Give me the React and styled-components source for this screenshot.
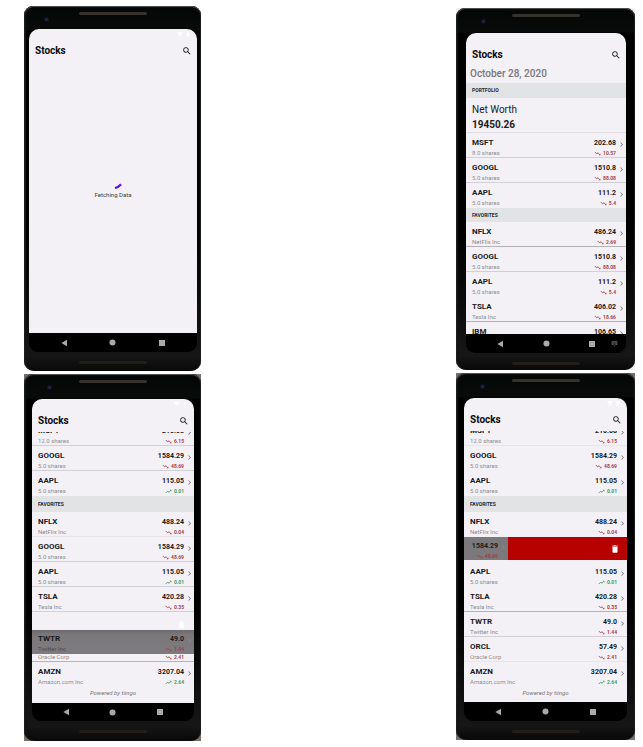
import React from "react";
import styled, { createGlobalStyle, css } from "styled-components";
import {
  MdSearch,
  MdTrendingDown,
  MdTrendingUp,
  MdChevronRight,
  MdDelete,
  MdSignalWifi4Bar,
  MdBatteryFull,
  MdKeyboardHide,
} from "react-icons/md";

const Global = createGlobalStyle`
  * { box-sizing: border-box; }
  body { margin: 0; background: #fff; font-family: Roboto, "Liberation Sans", sans-serif; color: #1b1a1c; }
  button { border: 0; padding: 0; background: none; color: inherit; font: inherit; display: flex; align-items: center; justify-content: center; }
  h1, h2, p, ul { margin: 0; padding: 0; }
  ul { list-style: none; }
  svg { display: block; }
`;

const Page = styled.main`
  display: flex;
  justify-content: space-between;
  align-items: flex-start;
  padding: 6px 8px 6px 24px;
`;

const Column = styled.div`
  display: flex;
  flex-direction: column;
  gap: 3px;
  padding-top: ${(p) => p.$drop || 0}px;
`;

const Backdrop = styled.div`
  background: ${(p) => p.$tone || "#fff"};
`;

const Frame = styled.section`
  display: flex;
  flex-direction: column;
  width: ${(p) => p.$width}px;
  padding: 0 ${(p) => p.$right}px 0 ${(p) => p.$left}px;
  background: linear-gradient(#050606 0, #090a0a 24px, #000 25px, #000 60%, #0b0b0b 80%, #161616 96%, #080808 100%);
  border-radius: 9px 9px 10px 10px;
  box-shadow: inset 0 1px 1px #555857, inset 2px 0 1px #161817, inset -1px 0 1px #161817;
`;

const Forehead = styled.div`
  position: relative;
  height: ${(p) => p.$height}px;
  padding-top: 6px;
`;

const Speaker = styled.div`
  width: 68px;
  height: 3px;
  margin: 0 auto;
  border-radius: 2px;
  background: ${(p) => (p.$dim ? "#211f18" : "#35312c")};
`;

const Camera = styled.div`
  position: absolute;
  left: ${(p) => p.$left}px;
  top: 12px;
  width: 3px;
  height: 3px;
  border-radius: 50%;
  background: #1d2350;
  box-shadow: 0 0 1px 1px #14161d;
`;

const Chin = styled.div`
  height: ${(p) => p.$height}px;
  padding-top: 9px;
`;

const Screen = styled.div`
  display: flex;
  flex-direction: column;
  background: #f3f1f5;
  border-radius: 10px 10px 0 0;
  overflow: hidden;
`;

const StatusBar = styled.div`
  display: flex;
  justify-content: flex-end;
  align-items: center;
  gap: 2px;
  height: 10px;
  padding-right: 6px;
  color: #fff;
`;

const TitleBar = styled.header`
  display: flex;
  justify-content: space-between;
  align-items: center;
  height: 23px;
  padding: 0 5px 0 6px;
`;

const Title = styled.h1`
  font-size: 10px;
  line-height: 13px;
  font-weight: 700;
  color: #0b0b0c;
`;

const Body = styled.div`
  height: ${(p) => p.$height}px;
  overflow: hidden;
`;

const Scrolled = styled.div`
  margin-top: -${(p) => p.$by}px;
`;

const Loading = styled(Body)`
  display: flex;
  flex-direction: column;
  align-items: center;
  justify-content: center;
  padding-bottom: 14px;
  font-size: 6px;
  line-height: 8px;
  color: #3a393b;
`;

const Spinner = styled.svg`
  width: 8px;
  height: 6px;
  margin: 0 0 2px 10px;
`;

const DateLine = styled.p`
  padding: 0 4px 2px;
  font-size: 10px;
  line-height: 15px;
  font-weight: 500;
  color: #77767a;
`;

const SectionTitle = styled.h2`
  padding: 0 6px;
  background: #e1e3e5;
  font-size: 5px;
  line-height: ${(p) => p.$line || 16}px;
  font-weight: 700;
  color: #29292a;
`;

const Worth = styled.div`
  height: 35px;
  padding: 4px 6px 0;
  font-size: 10px;
  line-height: 15px;
  border-bottom: 1px solid #dedce0;
`;

const WorthValue = styled.p`
  font-weight: 700;
`;

const lines = { dark: "#b4b2b6", mid: "#d2d0d4", faint: "#e7e5e9", none: "transparent" };

const Item = styled.li`
  display: grid;
  grid-template-columns: 1fr auto 10px;
  height: 25px;
  padding-top: 5px;
  border-bottom: 1px solid ${(p) => lines[p.$line || "none"]};
  padding-left: 6px;
  ${(p) =>
    p.$dragged &&
    css`
      height: 24px;
      padding-top: 4px;
      border-bottom: 0;
      background: linear-gradient(#6c6a6d, #7a787b 5px, #7d7b7e);
    `}
`;

const Stack = styled.div`
  display: flex;
  flex-direction: column;
  align-items: ${(p) => (p.$end ? "flex-end" : "flex-start")};
  gap: 1px;
`;

const Symbol = styled.span`
  font-size: 8px;
  line-height: 10px;
  font-weight: 700;
`;

const Price = styled.span`
  font-size: 7px;
  line-height: 10px;
  font-weight: 700;
`;

const Detail = styled.span`
  font-size: 6px;
  line-height: 8px;
  color: ${(p) => (p.$dim ? "#4d4b4e" : "#8f8d91")};
`;

const Change = styled.span`
  display: flex;
  align-items: center;
  gap: 2px;
  font-size: 5px;
  line-height: 8px;
  font-weight: 700;
  color: ${(p) => (p.$dim ? "#9f3d46" : p.$up ? "#3a9d62" : "#a9404a")};
`;

const Open = styled.button`
  height: 13px;
  color: ${(p) => (p.$dim ? "#8d8b8e" : "#7b797d")};
`;

const SwipeGap = styled.li`
  display: flex;
  justify-content: flex-end;
  align-items: center;
  height: 18px;
  padding: 6px 8px 0 0;
  color: #fff;
`;

const Peek = styled.li`
  display: flex;
  justify-content: space-between;
  align-items: flex-end;
  height: 8px;
  padding: 0 10px 0 6px;
  overflow: hidden;
  border-bottom: 1px solid ${lines.dark};
`;

const Swiped = styled.li`
  display: flex;
  height: 23px;
  margin-bottom: 2px;
  background: #b70000;
`;

const SwipedCard = styled.div`
  display: grid;
  grid-template-columns: 1fr 10px;
  width: 44px;
  padding-top: 4px;
  background: #7b797c;
`;

const DeleteButton = styled.button`
  margin-left: auto;
  width: 25px;
  color: #fff;
`;

const Credit = styled.p`
  padding-top: 2px;
  font-size: 6px;
  line-height: 8px;
  font-style: italic;
  text-align: center;
  color: #737175;
`;

const NavBar = styled.nav`
  position: relative;
  display: grid;
  grid-template-columns: repeat(3, 1fr);
  height: ${(p) => p.$height}px;
  padding: 0 11px;
  background: #000;
  border-radius: 0 0 9px 9px;
  color: #aaa;
`;

const KeyboardButton = styled.button`
  position: absolute;
  right: 8px;
  top: 6px;
  color: #555;
`;

function Trend({ value, up, dim }) {
  return (
    <Change $up={up} $dim={dim}>
      {up ? <MdTrendingUp size={7} /> : <MdTrendingDown size={7} />}
      {value}
    </Change>
  );
}

function Stock({ symbol, detail, price, change, up, line, dragged }) {
  return (
    <Item $line={line} $dragged={dragged}>
      <Stack>
        <Symbol>{symbol}</Symbol>
        {detail && <Detail $dim={dragged}>{detail}</Detail>}
      </Stack>
      <Stack $end>
        <Price>{price}</Price>
        {change && <Trend value={change} up={up} dim={dragged} />}
      </Stack>
      <Open aria-label={`Open ${symbol}`} $dim={dragged}>
        <MdChevronRight size={9} />
      </Open>
    </Item>
  );
}

function Phone({ width, left, right, top, nav, chin, camera, tone, status, keyboard, children }) {
  return (
    <Backdrop $tone={tone}>
      <Frame $width={width} $left={left} $right={right}>
        <Forehead $height={top}>
          <Speaker />
          <Camera $left={camera} />
        </Forehead>
        <Screen>
          <StatusBar>
            {status && (
              <>
                <MdSignalWifi4Bar size={6} />
                <MdBatteryFull size={6} />
              </>
            )}
          </StatusBar>
          <TitleBar>
            <Title>Stocks</Title>
            <button aria-label="Search">
              <MdSearch size={10} />
            </button>
          </TitleBar>
          {children}
        </Screen>
        <NavBar $height={nav}>
          <button aria-label="Back">
            <svg width="7" height="8" viewBox="0 0 7 8">
              <path d="M6 0.8v6.4L0.4 4z" fill="currentColor" />
            </svg>
          </button>
          <button aria-label="Home">
            <svg width="7" height="7" viewBox="0 0 7 7">
              <circle cx="3.5" cy="3.5" r="3" fill="currentColor" />
            </svg>
          </button>
          <button aria-label="Recent apps">
            <svg width="6" height="6" viewBox="0 0 6 6">
              <path d="M0 0h6v6H0z" fill="currentColor" />
            </svg>
          </button>
          {keyboard && (
            <KeyboardButton aria-label="Hide keyboard">
              <MdKeyboardHide size={7} />
            </KeyboardButton>
          )}
        </NavBar>
        <Chin $height={chin}>
          <Speaker $dim />
        </Chin>
      </Frame>
    </Backdrop>
  );
}

export default function App() {
  return (
    <>
      <Global />
      <Page>
        <Column>
          <Phone width={177} left={5} right={4} top={23} nav={19} chin={19} camera={16} status>
            <Loading $height={271}>
              <Spinner viewBox="0 0 8 6">
                <path d="M1 5Q4.5 4.2 7 1.2" stroke="#5c14e8" strokeWidth="2.2" fill="none" />
              </Spinner>
              <p>Fetching Data</p>
            </Loading>
          </Phone>
          <Phone width={177} left={8} right={7} top={25} nav={18} chin={20} camera={16} tone="#77706b" status>
            <Body $height={271}>
              <Scrolled $by={11}>
                <ul>
                  <Stock symbol="MSFT" detail="12.0 shares" price="210.08" change="6.15" line="mid" />
                  <Stock symbol="GOOGL" detail="5.0 shares" price="1584.29" change="48.69" line="mid" />
                  <Stock symbol="AAPL" detail="5.0 shares" price="115.05" change="0.01" up />
                </ul>
                <SectionTitle>FAVORITES</SectionTitle>
                <ul>
                  <Stock symbol="NFLX" detail="NetFlix Inc" price="488.24" change="0.04" line="faint" />
                  <Stock symbol="GOOGL" detail="5.0 shares" price="1584.29" change="48.69" line="mid" />
                  <Stock symbol="AAPL" detail="5.0 shares" price="115.05" change="0.01" up line="mid" />
                  <Stock symbol="TSLA" detail="Tesla Inc" price="420.28" change="0.35" line="mid" />
                  <SwipeGap>
                    <MdDelete size={9} />
                  </SwipeGap>
                  <Stock symbol="TWTR" detail="Twitter Inc" price="49.0" change="1.44" dragged />
                  <Peek>
                    <Detail>Oracle Corp</Detail>
                    <Trend value="2.41" />
                  </Peek>
                  <Stock symbol="AMZN" detail="Amazon.com Inc" price="3207.04" change="2.64" up />
                </ul>
                <Credit>Powered by tiingo</Credit>
              </Scrolled>
            </Body>
          </Phone>
        </Column>
        <Column $drop={2}>
          <Phone width={179} left={10} right={9} top={25} nav={19} chin={17} camera={16} tone="#f1f0ef" keyboard>
            <Body $height={268}>
              <DateLine>October 28, 2020</DateLine>
              <SectionTitle $line={15}>PORTFOLIO</SectionTitle>
              <Worth>
                <p>Net Worth</p>
                <WorthValue>19450.26</WorthValue>
              </Worth>
              <ul>
                <Stock symbol="MSFT" detail="8.0 shares" price="202.68" change="10.57" line="mid" />
                <Stock symbol="GOOGL" detail="5.0 shares" price="1510.8" change="88.08" line="mid" />
                <Stock symbol="AAPL" detail="5.0 shares" price="111.2" change="5.4" />
              </ul>
              <SectionTitle $line={14}>FAVORITES</SectionTitle>
              <ul>
                <Stock symbol="NFLX" detail="NetFlix Inc" price="486.24" change="2.69" line="dark" />
                <Stock symbol="GOOGL" detail="5.0 shares" price="1510.8" change="88.08" line="mid" />
                <Stock symbol="AAPL" detail="5.0 shares" price="111.2" change="5.4" />
                <Stock symbol="TSLA" detail="Tesla Inc" price="406.02" change="18.66" line="dark" />
                <Stock symbol="IBM" price="106.65" />
              </ul>
            </Body>
          </Phone>
          <Phone width={179} left={8} right={8} top={25} nav={19} chin={19} camera={17} tone="#77706b" status>
            <Body $height={271}>
              <Scrolled $by={10}>
                <ul>
                  <Stock symbol="MSFT" detail="12.0 shares" price="210.08" change="6.15" line="faint" />
                  <Stock symbol="GOOGL" detail="5.0 shares" price="1584.29" change="48.69" />
                  <Stock symbol="AAPL" detail="5.0 shares" price="115.05" change="0.01" up />
                </ul>
                <SectionTitle>FAVORITES</SectionTitle>
                <ul>
                  <Stock symbol="NFLX" detail="NetFlix Inc" price="488.24" change="0.04" />
                  <Swiped>
                    <SwipedCard>
                      <Stack $end>
                        <Price>1584.29</Price>
                        <Trend value="48.69" dim />
                      </Stack>
                      <Open aria-label="Open GOOGL" $dim>
                        <MdChevronRight size={9} />
                      </Open>
                    </SwipedCard>
                    <DeleteButton aria-label="Delete GOOGL">
                      <MdDelete size={10} />
                    </DeleteButton>
                  </Swiped>
                  <Stock symbol="AAPL" detail="5.0 shares" price="115.05" change="0.01" up />
                  <Stock symbol="TSLA" detail="Tesla Inc" price="420.28" change="0.35" line="dark" />
                  <Stock symbol="TWTR" detail="Twitter Inc" price="49.0" change="1.44" line="mid" />
                  <Stock symbol="ORCL" detail="Oracle Corp" price="57.49" change="2.41" line="faint" />
                  <Stock symbol="AMZN" detail="Amazon.com Inc" price="3207.04" change="2.64" up />
                </ul>
                <Credit>Powered by tiingo</Credit>
              </Scrolled>
            </Body>
          </Phone>
        </Column>
      </Page>
    </>
  );
}
